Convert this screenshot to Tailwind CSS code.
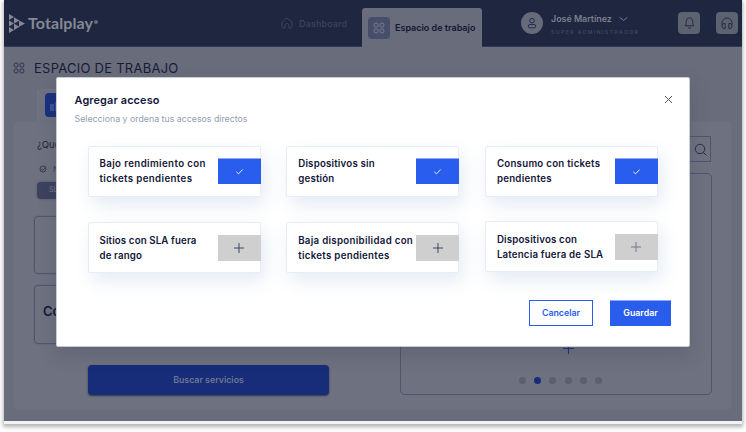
<!DOCTYPE html>
<html lang="es">
<head>
<meta charset="utf-8">
<title>Espacio de trabajo</title>
<script src="https://cdn.jsdelivr.net/npm/@tailwindcss/browser@4"></script>
</head>
<body class="h-[432px] w-[746px] overflow-hidden bg-white pl-1 font-['Inter','Liberation_Sans',sans-serif] text-[#121638]">
<svg class="hidden">
  <symbol id="grid" viewBox="0 0 12 12" fill="none" stroke="currentColor"><rect x="1.200" y="1.200" width="3.800" height="3.800" rx="1.200"/><rect x="7" y="1.200" width="3.800" height="3.800" rx="1.200"/><rect x="1.200" y="7" width="3.800" height="3.800" rx="1.200"/><rect x="7" y="7" width="3.800" height="3.800" rx="1.200"/></symbol>
  <symbol id="check" viewBox="0 0 10 10" fill="none" stroke="currentColor"><path d="M1.500 5.400 3.900 7.600 8.500 2.800"/></symbol>
  <symbol id="plus" viewBox="0 0 10 10" fill="none" stroke="currentColor"><path d="M5 0v10M0 5h10"/></symbol>
</svg>
<div class="relative h-[424px] w-[738px] border-b-[3px] border-[#f3f3f3] bg-[#696c7a] shadow-[0_2px_4px_1px_rgba(0,0,0,0.3)]">
  <header class="flex h-[47px] border-b border-[#343b55] bg-[#1f263f] whitespace-nowrap text-[#7b7f8c]">
    <div class="flex h-[46px] w-[273px] items-center pl-[5px]">
      <svg class="h-[19px] w-4" viewBox="0 0 16 19" fill="#858995"><path d="M0 0 5 3 0 6ZM0 6.5 5 9.5 0 12.5ZM0 13 5 16 0 19ZM5 3.2 10.5 6.4 5 9.5ZM5 9.7 10.5 12.8 5 16ZM10 6.5 16 9.6 10 12.7Z"/></svg>
      <span class="ml-[3px] font-['Lato',sans-serif] text-[16px] font-bold tracking-[0.1px] text-[#858995]">Totalplay</span>
      <span class="mt-[-2px] ml-px size-[4px] rounded-full bg-[#646a7a]"></span>
    </div>
    <div class="flex h-[46px] w-[85px] items-center pl-[4px] text-[#3d445b]">
      <svg class="h-3 w-3" viewBox="0 0 12 12" fill="none" stroke="currentColor"><path d="M4 11H2.2Q1 11 1 9.8V5L6 1l5 4v4.8Q11 11 9.8 11H8V8Q7 6.4 6 6.4T4 8Z"/></svg>
      <span class="ml-[6px] pt-px text-[9px] font-medium tracking-[0.15px]">Dashboard</span>
    </div>
    <div class="mt-2 flex h-[39px] w-[120px] items-center rounded-t-[3px] bg-[#696c7a] pl-[6px] text-[#141835]">
      <div class="flex size-[22px] shrink-0 items-center justify-center rounded-[4px] bg-[#464e6b] text-[#797f8f]"><svg class="size-3"><use href="#grid"/></svg></div>
      <span class="ml-[5px] text-[9px] font-semibold">Espacio de trabajo</span>
    </div>
    <div class="flex h-[46px] flex-1 items-center pl-[39px]">
      <div class="flex size-[22px] shrink-0 items-center justify-center rounded-full bg-[#676b79] text-[#252c46]">
        <svg class="size-3" viewBox="0 0 12 12" fill="none" stroke="currentColor"><circle cx="6" cy="3.7" r="2.3"/><rect x="2.3" y="7.5" width="7.4" height="3.3" rx="1.6"/></svg>
      </div>
      <div class="ml-2 w-[88px] pt-[3px]">
        <div class="flex h-[13px] items-center gap-[7px] text-[9px] font-semibold"><span class="tracking-[-0.07px]">José Martínez</span><svg class="h-1 w-[9px]" viewBox="0 0 9 4" fill="none" stroke="currentColor"><path d="m.5.2 4 3.2 4-3.2"/></svg></div>
        <div class="mt-px h-[10px] text-[5.2px] leading-[10px] font-medium tracking-[1.380px] text-[#434960]">SUPER ADMINISTRADOR</div>
      </div>
      <div class="ml-[39px] flex size-[22px] items-center justify-center rounded-[4px] bg-[#5d6271] text-[#242b43]"><svg class="h-3 w-[11px]" viewBox="0 0 11 12" fill="none" stroke="currentColor"><path d="M1.2 8.8C2.3 7.5 2 6.5 2.3 4.1 2.5 2 3.8.8 5.5.8S8.500 2 8.700 4.100C9 6.500 8.700 7.500 9.800 8.800ZM4 10.700q1.500 1 3 0"/></svg></div>
      <div class="ml-4 flex size-[22px] items-center justify-center rounded-[4px] bg-[#5d6271] text-[#242b43]"><svg class="h-3 w-3" viewBox="0 0 12 12" fill="none" stroke="currentColor"><path d="M1 8V6a5 5 0 0 1 10 0v2M4.200 6.500v5H3q-2 0-2-2.500t2-2.500ZM7.800 6.500v5h1.200q2 0 2-2.500T9 6.500Z"/></svg></div>
    </div>
  </header>
  <main class="pr-[10px] pl-[9px]">
    <div class="flex h-[42px] items-center text-[#2d3252]">
      <svg class="size-3"><use href="#grid"/></svg>
      <h1 class="mt-px ml-[9px] text-[13px] tracking-[0.25px] whitespace-nowrap text-[#171b3b]">ESPACIO DE TRABAJO</h1>
    </div>
    <div class="ml-6 h-8 w-[120px] rounded-t-[4px] border-x border-t border-[#717482] bg-[#6e717f] pt-[3px] pl-[7px]">
      <div class="flex size-6 items-end gap-px rounded-[4px] bg-[#17307f] pb-[6px] pl-[5px]"><i class="h-[7px] w-[4px] bg-[#3a5093]"></i><i class="h-[9px] w-[4px] bg-[#3a5093]"></i><i class="h-[5px] w-[4px] bg-[#3a5093]"></i></div>
    </div>
    <div class="flex h-[289px] rounded-[4px] border border-[#6b6e7e] bg-[#6e717f]">
      <section class="w-[386px] pt-[14px] pl-[20px]">
        <p class="ml-[3px] h-[18px] text-[9.500px] leading-[18px] text-[#1d2140]">¿Qué deseas hacer?</p>
        <div class="mt-[7px] ml-[5px] flex h-4 items-center text-[8px] text-[#363b54]">
          <svg class="size-2" viewBox="0 0 8 8" fill="none" stroke="currentColor"><circle cx="4" cy="4" r="3"/><path d="m2.300 4 1.400 1.400L7 1.700"/></svg><span class="ml-[6px]">Nuevo</span>
        </div>
        <div class="mt-[5px] ml-[3px] flex h-[17px] w-[60px] items-center rounded-[4px] bg-[#3c425f] pl-3 text-[7px] text-[#777b8a] shadow-[0_0_2px_1px_#626575]">SLA</div>
        <div class="mt-[17px] h-[58px] w-[340px] rounded-[4px] border border-[#515570] shadow-[0_0_0_1px_#696c7b]"></div>
        <div class="mt-[11px] flex h-[59px] w-[340px] items-center rounded-[4px] border border-[#515570] pb-[6px] pl-2 text-[13px] font-semibold shadow-[0_0_0_1px_#696c7b]">Consumo</div>
        <button class="mt-[21px] ml-[54px] flex h-[30px] w-[241px] items-center justify-center rounded-[4px] bg-[#172d79] text-[8.800px] font-semibold text-[#6e7693] shadow-[0_1px_2px_rgba(20,25,50,0.7)]">Buscar servicios</button>
      </section>
      <section class="flex w-[312px] flex-col pt-[14px]">
        <div class="flex h-[26px] w-[311px] items-center justify-end border border-[#4f536c] pr-[3px] text-[#282d47]"><svg class="size-[13px]" viewBox="0 0 13 13" fill="none" stroke="currentColor"><circle cx="6" cy="6" r="4.700"/><path d="m9.300 9.300 3 3"/></svg></div>
        <div class="mt-[11px] flex h-[222px] w-[312px] flex-col items-center rounded-[5px] border border-[#4f5471] pt-[169px]">
          <svg class="mr-[-24px] h-[11px] w-[11px] text-[#1b3180]"><use href="#plus"/></svg>
          <div class="mt-[23px] mr-[-9px] flex gap-[8.400px]"><i class="size-[7px] rounded-full bg-[#5c5f6e]"></i><i class="size-[7px] rounded-full bg-[#172d79]"></i><i class="size-[7px] rounded-full bg-[#5c5f6e]"></i><i class="size-[7px] rounded-full bg-[#5c5f6e]"></i><i class="size-[7px] rounded-full bg-[#5c5f6e]"></i><i class="size-[7px] rounded-full bg-[#5c5f6e]"></i></div>
        </div>
      </section>
    </div>
  </main>

  <div role="dialog" class="absolute top-[77px] left-[52px] h-[270px] w-[634px] rounded-[2px] border border-[#c9cbd2] bg-white whitespace-nowrap shadow-[0_8px_18px_rgba(55,60,75,0.22)]">
    <div class="flex h-[68px] justify-between pt-3 pr-4 pl-[17.500px]">
      <div>
        <h2 class="h-5 text-[10.900px] leading-5 font-semibold tracking-[0.13px]">Agregar acceso</h2>
        <p class="text-[8.800px] leading-[18px] text-[#929db3]">Selecciona y ordena tus accesos directos</p>
      </div>
      <svg class="mt-[5px] size-[9px]" viewBox="0 0 9 9" fill="none" stroke="#505467"><path d="m1 1 7 7M8 1 1 8"/></svg>
    </div>
    <div class="grid grid-cols-[173px_173px_173px] gap-x-[25.700px] gap-y-[25px] pl-[30.500px] text-[9.700px] leading-[15px] font-semibold tracking-[0.260px]">
      <div class="flex h-[51px] items-center justify-between rounded-[2px] border border-[#e7edf8] bg-white pb-px pl-[11px] shadow-[4px_8px_18px_rgba(70,110,180,0.14)]"><p class="tracking-[0.380px]">Bajo rendimiento con<br>tickets pendientes</p><span class="mr-[-1px] flex h-[26px] w-[43px] items-center justify-center border-t border-[#8da9f2] bg-[#285ded] text-white"><svg class="size-[9px]"><use href="#check"/></svg></span></div>
      <div class="flex h-[51px] items-center justify-between rounded-[2px] border border-[#e7edf8] bg-white pb-px pl-[11px] shadow-[4px_8px_18px_rgba(70,110,180,0.14)]"><p class="tracking-[0.200px]">Dispositivos sin<br>gestión</p><span class="mr-[-1px] flex h-[26px] w-[43px] items-center justify-center border-t border-[#8da9f2] bg-[#285ded] text-white"><svg class="size-[9px]"><use href="#check"/></svg></span></div>
      <div class="flex h-[51px] items-center justify-between rounded-[2px] border border-[#e7edf8] bg-white pb-px pl-[11px] shadow-[4px_8px_18px_rgba(70,110,180,0.14)]"><p>Consumo con tickets<br>pendientes</p><span class="mr-[-1px] flex h-[26px] w-[43px] items-center justify-center border-t border-[#8da9f2] bg-[#285ded] text-white"><svg class="size-[9px]"><use href="#check"/></svg></span></div>
      <div class="flex h-[51px] items-center justify-between rounded-[2px] border border-[#e7edf8] bg-white pt-px pl-[11px] shadow-[4px_8px_18px_rgba(70,110,180,0.14)]"><p class="tracking-[0.130px]">Sitios con SLA fuera<br>de rango</p><span class="mr-[-1px] flex h-[26px] w-[43px] items-center justify-center bg-[#cfcfcf] text-[#424763]"><svg class="size-[10px]"><use href="#plus"/></svg></span></div>
      <div class="flex h-[51px] items-center justify-between rounded-[2px] border border-[#e7edf8] bg-white pt-px pl-[11px] shadow-[4px_8px_18px_rgba(70,110,180,0.14)]"><p class="tracking-[0.300px]">Baja disponibilidad con<br>tickets pendientes</p><span class="mr-[-1px] flex h-[26px] w-[43px] items-center justify-center bg-[#cfcfcf] text-[#424763]"><svg class="size-[10px]"><use href="#plus"/></svg></span></div>
      <div class="flex h-[51px] -translate-y-px items-center justify-between rounded-[2px] border border-[#e7edf8] bg-white pt-px pl-[11px] shadow-[4px_8px_18px_rgba(70,110,180,0.14)]"><p class="tracking-[0.190px]">Dispositivos con<br>Latencia fuera de SLA</p><span class="mr-[-1px] flex h-[26px] w-[43px] items-center justify-center bg-[#cfcfcf] text-[#777b87]"><svg class="size-[10px]"><use href="#plus"/></svg></span></div>
    </div>
    <div class="mt-[27px] flex justify-end gap-[17px] pr-[18px] text-[8.800px] font-semibold">
      <button class="h-[26px] w-[64px] border border-[#285ded] text-[#285ded]">Cancelar</button>
      <button class="h-[26px] w-[61px] rounded-[1px] border border-[#285ded] border-t-[#8da9f2] bg-[#285ded] text-white">Guardar</button>
    </div>
  </div>
</div>
</body>
</html>
